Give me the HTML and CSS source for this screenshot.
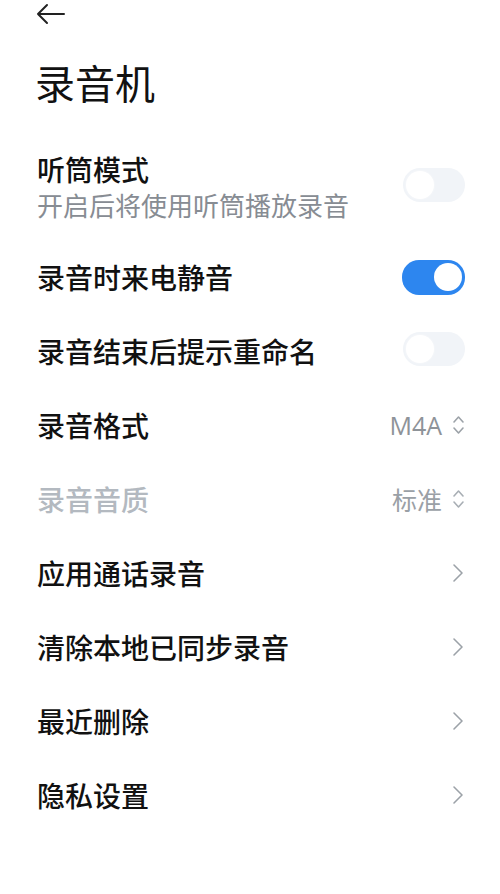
FILE: index.html
```html
<!DOCTYPE html>
<html lang="zh-CN">
<head>
    <meta charset="UTF-8">
    <meta name="viewport" content="width=device-width, initial-scale=1.0">
    <title>录音机</title>
    <link rel="stylesheet" href="styles.css">
</head>
<body>
    <div class="page">
        <div class="topbar">
            <svg class="back" width="30" height="24" viewBox="0 0 30 24">
                <path d="M28 12H2M11 3L2 12l9 9" fill="none" stroke="#222" stroke-width="2" stroke-linecap="round" stroke-linejoin="round"/>
            </svg>
        </div>
        <h1 class="title">录音机</h1>

        <div class="list">
            <div class="row row-tall">
                <div class="label">
                    <div class="name">听筒模式</div>
                    <div class="desc">开启后将使用听筒播放录音</div>
                </div>
                <div class="switch"><span class="knob"></span></div>
            </div>

            <div class="row">
                <div class="name">录音时来电静音</div>
                <div class="switch on"><span class="knob"></span></div>
            </div>

            <div class="row">
                <div class="name">录音结束后提示重命名</div>
                <div class="switch"><span class="knob"></span></div>
            </div>

            <div class="row">
                <div class="name">录音格式</div>
                <div class="value">
                    <span>M4A</span>
                    <svg width="13" height="22" viewBox="0 0 13 22">
                        <path d="M2 8l4.5-5L11 8M2 14l4.5 5L11 14" fill="none" stroke="#9ca2a8" stroke-width="1.6" stroke-linecap="round" stroke-linejoin="round"/>
                    </svg>
                </div>
            </div>

            <div class="row">
                <div class="name disabled">录音音质</div>
                <div class="value">
                    <span class="light">标准</span>
                    <svg width="13" height="22" viewBox="0 0 13 22">
                        <path d="M2 8l4.5-5L11 8M2 14l4.5 5L11 14" fill="none" stroke="#a8aeb4" stroke-width="1.6" stroke-linecap="round" stroke-linejoin="round"/>
                    </svg>
                </div>
            </div>

            <div class="row">
                <div class="name">应用通话录音</div>
                <svg class="arrow" width="12" height="20" viewBox="0 0 12 20">
                    <path d="M2 2l8 8-8 8" fill="none" stroke="#9ca2a8" stroke-width="1.6" stroke-linecap="round" stroke-linejoin="round"/>
                </svg>
            </div>

            <div class="row">
                <div class="name">清除本地已同步录音</div>
                <svg class="arrow" width="12" height="20" viewBox="0 0 12 20">
                    <path d="M2 2l8 8-8 8" fill="none" stroke="#9ca2a8" stroke-width="1.6" stroke-linecap="round" stroke-linejoin="round"/>
                </svg>
            </div>

            <div class="row">
                <div class="name">最近删除</div>
                <svg class="arrow" width="12" height="20" viewBox="0 0 12 20">
                    <path d="M2 2l8 8-8 8" fill="none" stroke="#9ca2a8" stroke-width="1.6" stroke-linecap="round" stroke-linejoin="round"/>
                </svg>
            </div>

            <div class="row">
                <div class="name">隐私设置</div>
                <svg class="arrow" width="12" height="20" viewBox="0 0 12 20">
                    <path d="M2 2l8 8-8 8" fill="none" stroke="#9ca2a8" stroke-width="1.6" stroke-linecap="round" stroke-linejoin="round"/>
                </svg>
            </div>
        </div>
    </div>
</body>
</html>
```

FILE: styles.css
```css
/* ===== General ===== */
body {
    margin: 0;
    background: #fff;
    font-family: "Noto Sans CJK SC", "Noto Sans", sans-serif;
    color: #111;
}

.page {
    padding: 0 35px 0 37px;
}

/* ===== Header ===== */
.topbar {
    height: 28px;
    display: flex;
    align-items: center;
}

.back {
    display: block;
    margin-left: -1px;
}

.title {
    margin: 34px 0 0 -2px;
    font-size: 40px;
    line-height: 40px;
    font-weight: 400;
}

/* ===== List ===== */
.list {
    margin-top: 32px;
}

.row {
    height: 74px;
    display: flex;
    align-items: center;
    justify-content: space-between;
}

.row-tall {
    height: 106px;
}

.name {
    font-size: 28px;
    line-height: 36px;
    font-weight: 500;
}

.name.disabled {
    color: #b3b9c0;
}

.desc {
    font-size: 26px;
    line-height: 36px;
    color: #878c93;
}

/* Switch */
.switch {
    position: relative;
    width: 62px;
    height: 34px;
    border-radius: 17px;
    background: #f1f4f8;
    margin-top: -4px;
}

.switch .knob {
    position: absolute;
    top: 3px;
    left: 3px;
    width: 28px;
    height: 28px;
    border-radius: 50%;
    background: #fff;
    box-shadow: 0 0 0 1px #f4f6f9;
}

.switch.on {
    width: 63px;
    height: 35px;
    background: #2d86ef;
    margin-top: 0;
}

.switch.on .knob {
    left: auto;
    right: 3px;
    top: 3.5px;
    box-shadow: none;
}

/* Value */
.value {
    display: flex;
    align-items: center;
    gap: 10px;
    font-family: "Open Sans", "Noto Sans CJK SC", sans-serif;
    font-size: 25px;
    color: #8e9399;
}

.value .light {
    font-family: "Noto Sans CJK SC", sans-serif;
    color: #9aa0a6;
}

.arrow {
    display: block;
    margin-right: 1px;
}
```
